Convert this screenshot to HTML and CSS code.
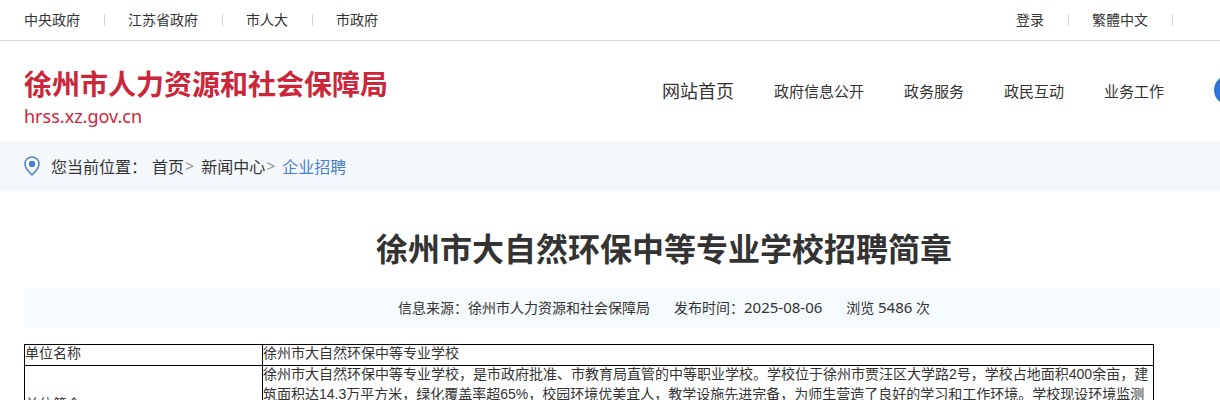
FILE: index.html
```html
<!DOCTYPE html>
<html lang="zh-CN">
<head>
    <meta charset="UTF-8">
    <meta name="viewport" content="width=device-width, initial-scale=1.0">
    <title>徐州市大自然环保中等专业学校招聘简章</title>
    <link rel="stylesheet" href="styles.css">
</head>
<body>
    <div class="topbar">
        <div class="container topbar-inner">
            <ul class="links">
                <li><a href="#">中央政府</a></li>
                <li><a href="#">江苏省政府</a></li>
                <li><a href="#">市人大</a></li>
                <li><a href="#">市政府</a></li>
            </ul>
            <ul class="links links-user">
                <li><a href="#">登录</a></li>
                <li><a href="#">繁體中文</a></li>
                <li></li>
            </ul>
        </div>
    </div>

    <header class="container header">
        <a class="brand" href="#">
            <span class="brand-name">徐州市人力资源和社会保障局</span>
            <span class="brand-url">hrss.xz.gov.cn</span>
        </a>
        <nav class="nav">
            <a class="nav-home" href="#">网站首页</a>
            <a href="#">政府信息公开</a>
            <a href="#">政务服务</a>
            <a href="#">政民互动</a>
            <a href="#">业务工作</a>
            <button class="search-btn" type="button"></button>
        </nav>
    </header>

    <div class="crumbs">
        <div class="container crumbs-inner">
            <svg class="pin" width="16" height="20" viewBox="0 0 16 20">
                <path d="M8 1C4.100 1 .9 4.100 .9 7.900c0 3.900 3.400 7.400 7.100 11.100 3.700-3.700 7.100-7.200 7.100-11.100C15.100 4.100 11.900 1 8 1z" fill="#fff" stroke="#4a80cb" stroke-width="1.500"/>
                <circle cx="8" cy="8" r="3.200" fill="#4a80cb"/>
            </svg>
            <span class="crumbs-label">您当前位置：</span>
            <a href="#">首页</a><span class="sep">&gt;</span>
            <a href="#">新闻中心</a><span class="sep">&gt;</span>
            <a class="current" href="#">企业招聘</a>
        </div>
    </div>

    <main class="container">
        <h1 class="title">徐州市大自然环保中等专业学校招聘简章</h1>
        <div class="meta">
            <span>信息来源：徐州市人力资源和社会保障局</span>
            <span>发布时间：<span class="num">2025-08-06</span></span>
            <span>浏览 <span class="num">5486</span> 次</span>
        </div>
        <table class="info">
            <tr>
                <th scope="row"><p>单位名称</p></th>
                <td><p>徐州市大自然环保中等专业学校</p></td>
            </tr>
            <tr class="intro">
                <th scope="row"><p>单位简介</p></th>
                <td><p>徐州市大自然环保中等专业学校，是市政府批准、市教育局直管的中等职业学校。学校位于徐州市贾汪区大学路2号，学校占地面积400余亩，建筑面积达14.3万平方米，绿化覆盖率超65%，校园环境优美宜人，教学设施先进完备，为师生营造了良好的学习和工作环境。学校现设环境监测</p></td>
            </tr>
        </table>
    </main>
</body>
</html>
```
FILE: styles.css
```css
*{
    box-sizing: border-box;
}
body{
    margin: 0;
    overflow-x: hidden;
    background: #fff;
    color: #333;
    font-family: "Noto Sans", "Noto Sans CJK SC", sans-serif;
    font-size: 14px;
}
a{
    color: inherit;
    text-decoration: none;
}
.container{
    min-width: 1280px;
    margin: 0 24px;
}

/* top bar */
.topbar{
    border-bottom: 1px solid #d5d8da;
}
.topbar-inner{
    display: flex;
    justify-content: space-between;
    line-height: 40px;
}
.links{
    display: flex;
    margin: 0;
    padding: 0;
    list-style: none;
}
.links li{
    display: flex;
    align-items: center;
}
.links li + li::before{
    content: "";
    width: 1px;
    height: 12px;
    margin: 0 23px 0 24px;
    background: #ccd3d9;
}
.links-user{
    padding-right: 108px;
}

/* header */
.header{
    display: flex;
    justify-content: space-between;
    align-items: center;
    height: 100px;
    padding-right: 60px;
}
.brand{
    display: flex;
    flex-direction: column;
    padding-top: 13px;
    color: #cb2639;
}
.brand-name{
    font-size: 28px;
    font-weight: bold;
    line-height: 36px;
}
.brand-url{
    font-size: 18px;
    line-height: 28px;
}
.nav{
    display: flex;
    align-items: center;
    gap: 40px;
    padding-bottom: 2px;
    font-size: 15px;
}
.nav-home{
    font-size: 18px;
}
.search-btn{
    width: 30px;
    height: 30px;
    margin-left: 10px;
    padding: 0;
    border: 0;
    border-radius: 50%;
    background: #2e74d9;
}

/* breadcrumb */
.crumbs{
    background: #f4f8fd;
}
.crumbs-inner{
    display: flex;
    align-items: center;
    height: 50px;
    font-size: 16px;
}
.crumbs-label{
    margin: 0 5px 0 11px;
}
.sep{
    margin: 0 7px 0 1px;
    color: #999;
}
.current{
    color: #4a80cb;
}

/* article */
.title{
    margin: 34px 0 15px;
    font-size: 32px;
    line-height: 48px;
    text-align: center;
}
.meta{
    display: flex;
    justify-content: center;
    gap: 24px;
    margin-bottom: 16px;
    background: #f5fafe;
    line-height: 40px;
}
.num{
    font-size: 15px;
    line-height: 20px;
}
.info{
    width: 1130px;
    border-collapse: collapse;
    table-layout: fixed;
    font-family: "Liberation Sans", "Noto Sans CJK SC", sans-serif;
    line-height: 20px;
}
.info th,
.info td{
    padding: 0;
    border: 1px solid #000;
    font-weight: normal;
    text-align: left;
}
.info th{
    width: 238px;
}
.info p{
    margin: -2px 0 2px;
}
.intro{
    height: 81px;
}
.intro td{
    vertical-align: top;
}
```
